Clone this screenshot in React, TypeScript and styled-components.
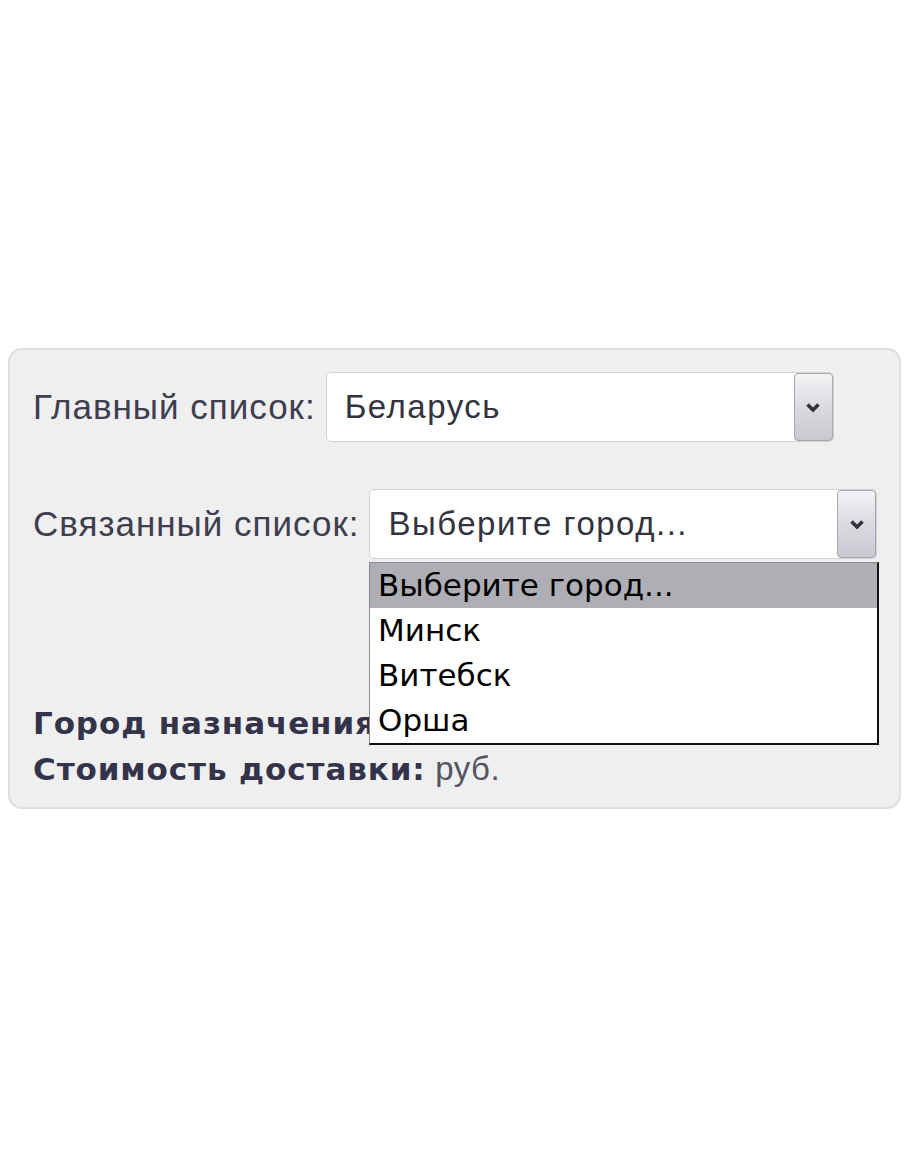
import React, { FC } from 'react';
import styled, { createGlobalStyle } from 'styled-components';

const GlobalStyle = createGlobalStyle`
  html, body {
    margin: 0;
    padding: 0;
    background: #ffffff;
  }
  body {
    font-family: "Liberation Sans", Arial, sans-serif;
  }
`;

const Page = styled.div`
  padding: 348px 9px 0 8px;
`;

const Panel = styled.div`
  position: relative;
  box-sizing: border-box;
  height: 461px;
  background: #efeff0;
  border: 2px solid #dedee0;
  border-radius: 14px;
  padding: 22px 0 0 23px;
`;

const Row = styled.div<{ gap: number }>`
  display: flex;
  align-items: center;
  margin-bottom: ${p => p.gap}px;
`;

const Label = styled.span`
  font-size: 35px;
  letter-spacing: 1px;
  color: #3e3e4e;
  margin-right: 10px;
  white-space: nowrap;
`;

const SelectBox = styled.div`
  position: relative;
  box-sizing: border-box;
  width: 508px;
  height: 70px;
  background: #ffffff;
  border: 1px solid #d2d2d6;
  border-radius: 5px;
  display: flex;
  align-items: center;
  padding-left: 18px;
`;

const SelectText = styled.span`
  font-size: 33px;
  letter-spacing: 1.5px;
  color: #333340;
  flex: 1;
`;

const ArrowButton = styled.div`
  box-sizing: border-box;
  width: 39px;
  height: 68px;
  border: 1px solid #a6a6ae;
  border-radius: 4px;
  background: linear-gradient(#f4f4f6 0%, #dcdce2 45%, #c8c8d0 100%);
  display: flex;
  align-items: center;
  justify-content: center;
`;

const Spacer = styled.div`
  height: 141px;
`;

const InfoLine = styled.div`
  font-size: 33px;
  line-height: 45px;
  letter-spacing: 0.5px;
  color: #555560;
`;

const Strong = styled.b`
  font-family: "DejaVu Sans", Verdana, sans-serif;
  font-size: 31px;
  letter-spacing: 0.9px;
  color: #33334a;
`;

const DropList = styled.ul`
  position: absolute;
  left: 359px;
  top: 212px;
  width: 510px;
  box-sizing: border-box;
  margin: 0;
  padding: 0;
  list-style: none;
  background: #ffffff;
  border-top: 1px solid #8a8a8a;
  border-left: 1px solid #8a8a8a;
  border-right: 2px solid #111111;
  border-bottom: 2px solid #111111;
`;

const DropItem = styled.li<{ active?: boolean }>`
  height: 45px;
  line-height: 45px;
  padding-left: 8px;
  font-family: "DejaVu Sans", Tahoma, sans-serif;
  font-size: 31px;
  color: #000000;
  background: ${p => (p.active ? '#aeaeb4' : '#ffffff')};
`;

const Chevron: FC = () => (
  <svg width="16" height="11" viewBox="0 0 16 11">
    <path d="M2.5 2.5 L8 8 L13.5 2.5" fill="none" stroke="#33333d" strokeWidth="3.6" />
  </svg>
);

const Select: FC<{ value: string }> = ({ value }) => (
  <SelectBox>
    <SelectText>{value}</SelectText>
    <ArrowButton>
      <Chevron />
    </ArrowButton>
  </SelectBox>
);

const cities = ['Выберите город...', 'Минск', 'Витебск', 'Орша'];

const App: FC = () => {
  return (
    <Page>
      <GlobalStyle />
      <Panel>
        <Row gap={47}>
          <Label>Главный список:</Label>
          <Select value="Беларусь" />
        </Row>
        <Row gap={0}>
          <Label>Связанный список:</Label>
          <Select value="Выберите город..." />
        </Row>
        <Spacer />
        <InfoLine>
          <Strong>Город назначения:</Strong> Выберите город...
        </InfoLine>
        <InfoLine>
          <Strong>Стоимость доставки:</Strong> руб.
        </InfoLine>
        <DropList>
          {cities.map((c, i) => (
            <DropItem key={c} active={i === 0}>{c}</DropItem>
          ))}
        </DropList>
      </Panel>
    </Page>
  );
};

export default App;
